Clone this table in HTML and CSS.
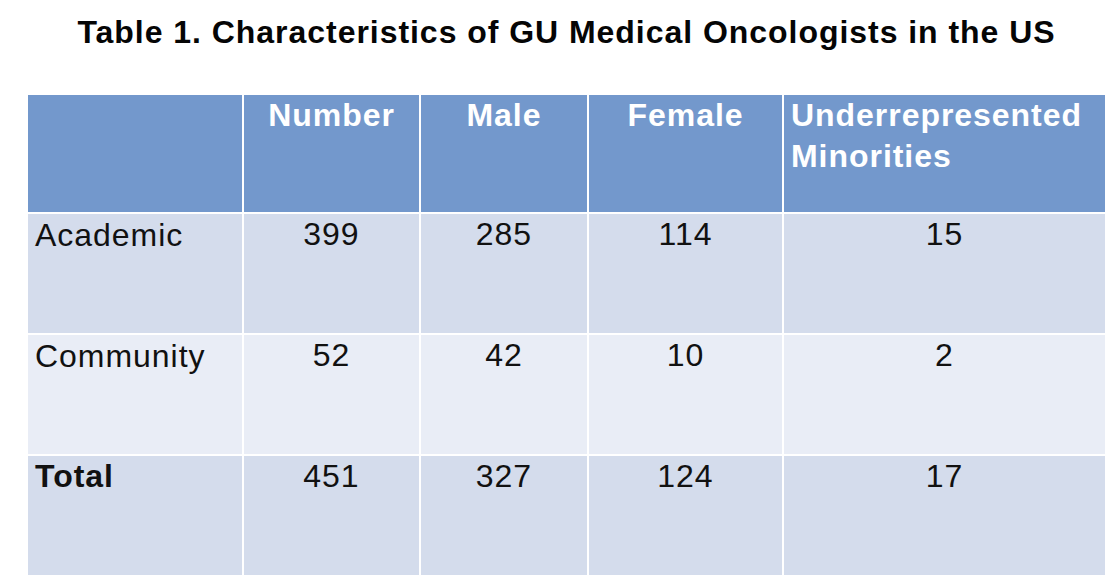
FILE: index.html
```html
<!DOCTYPE html>
<html lang="en">
<head>
<meta charset="utf-8">
<title>Table 1. Characteristics of GU Medical Oncologists in the US</title>
<link rel="stylesheet" href="styles.css">
</head>
<body>
<main class="slide">
  <h1 class="title">Table 1. Characteristics of GU Medical Oncologists in the US</h1>
  <div class="table" role="table">
    <div class="cell head" role="columnheader"></div>
    <div class="cell head center" role="columnheader">Number</div>
    <div class="cell head center" role="columnheader">Male</div>
    <div class="cell head center" role="columnheader">Female</div>
    <div class="cell head" role="columnheader">Underrepresented Minorities</div>

    <div class="cell band1 label" role="rowheader">Academic</div>
    <div class="cell band1 center" role="cell">399</div>
    <div class="cell band1 center" role="cell">285</div>
    <div class="cell band1 center" role="cell">114</div>
    <div class="cell band1 center" role="cell">15</div>

    <div class="cell band2 label" role="rowheader">Community</div>
    <div class="cell band2 center" role="cell">52</div>
    <div class="cell band2 center" role="cell">42</div>
    <div class="cell band2 center" role="cell">10</div>
    <div class="cell band2 center" role="cell">2</div>

    <div class="cell band1 label total" role="rowheader">Total</div>
    <div class="cell band1 center" role="cell">451</div>
    <div class="cell band1 center" role="cell">327</div>
    <div class="cell band1 center" role="cell">124</div>
    <div class="cell band1 center" role="cell">17</div>
  </div>
</main>
</body>
</html>
```
FILE: styles.css
```css
html, body {
  margin: 0;
  padding: 0;
  background: #ffffff;
}

body {
  font-family: "Liberation Sans", Arial, sans-serif;
  color: #111111;
}

.slide {
  width: 1077px;
  padding: 14px 0 0 28px;
}

.title {
  margin: 0;
  font-size: 32px;
  font-weight: bold;
  line-height: 37px;
  letter-spacing: 0.03em;
  text-align: center;
  color: #050505;
  white-space: nowrap;
}

.table {
  margin-top: 44px;
  display: grid;
  grid-template-columns: 214px 175px 166px 193px 321px;
  grid-template-rows: 117px 119px 119px 119px;
  gap: 2px;
  background: #ffffff;
}

.cell {
  font-size: 32px;
  line-height: 41px;
  letter-spacing: 0.03em;
  padding: 0 7px;
}

.head {
  background: #7398cc;
  color: #ffffff;
  font-weight: bold;
}

.band1 {
  background: #d4dcec;
}

.band2 {
  background: #e9edf6;
}

.center {
  text-align: center;
}

.label {
  padding-top: 1px;
}

.total {
  font-weight: bold;
  padding-top: 0;
}
```
